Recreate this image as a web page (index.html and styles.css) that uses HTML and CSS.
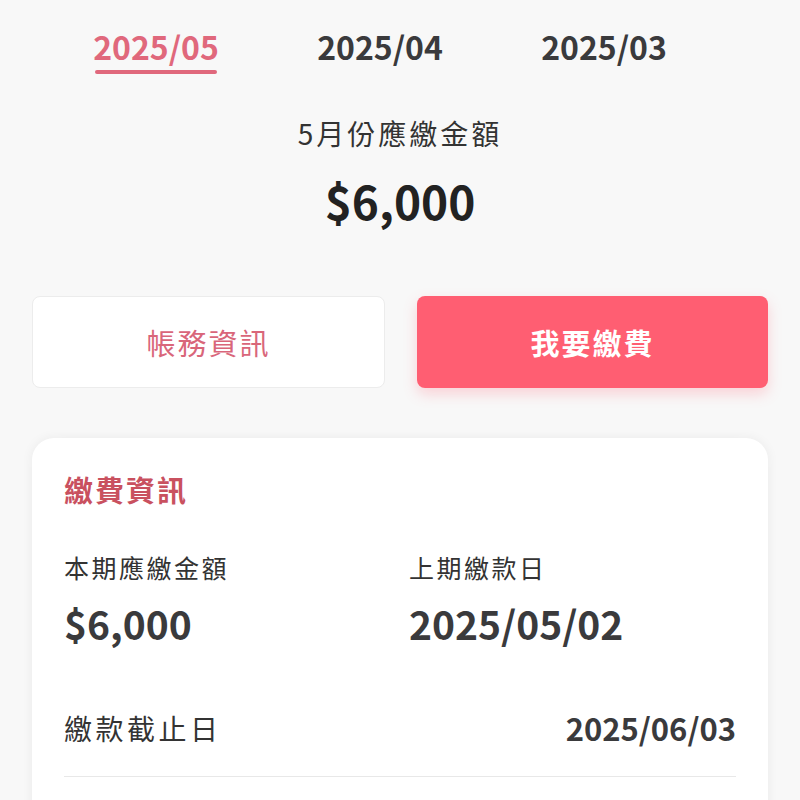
FILE: index.html
```html
<!DOCTYPE html>
<html lang="zh-Hant">
<head>
  <meta charset="UTF-8">
  <meta name="viewport" content="width=device-width, initial-scale=1.0">
  <title>繳費</title>
  <link rel="stylesheet" href="styles.css">
</head>
<body>
  <div class="page">
    <div class="tabs">
      <div class="tab active">2025/05</div>
      <div class="tab">2025/04</div>
      <div class="tab">2025/03</div>
    </div>

    <div class="summary">
      <div class="summary-label">5月份應繳金額</div>
      <div class="summary-amount">$6,000</div>
    </div>

    <div class="actions">
      <button class="btn btn-outline">帳務資訊</button>
      <button class="btn btn-primary">我要繳費</button>
    </div>

    <!-- payment info card -->
    <div class="card">
      <h2 class="card-title">繳費資訊</h2>
      <div class="info-grid">
        <div class="info-item">
          <div class="info-label">本期應繳金額</div>
          <div class="info-value">$6,000</div>
        </div>
        <div class="info-item">
          <div class="info-label">上期繳款日</div>
          <div class="info-value">2025/05/02</div>
        </div>
      </div>
      <div class="info-row">
        <div class="row-label">繳款截止日</div>
        <div class="row-value">2025/06/03</div>
      </div>
    </div>
  </div>
</body>
</html>
```

FILE: styles.css
```css
body {
  margin: 0;
  background-color: #f8f8f8;
  font-family: "Noto Sans CJK TC", "Noto Sans", sans-serif;
  color: #333;
}
.page {
  padding: 0 32px;
}
.tabs {
  display: flex;
  padding: 24px 0 0 12px;
}
.tab {
  width: 224px;
  text-align: center;
  font-size: 32px;
  font-weight: 700;
  color: #3a3a3c;
  line-height: 44px;
}
.tab.active {
  color: #e0687c;
}
.tab.active::after {
  content: "";
  display: block;
  width: 122px;
  height: 4px;
  margin: 2px auto 0;
  background-color: #e0687c;
  border-radius: 2px;
}
.summary {
  text-align: center;
  margin-top: 39px;
}
.summary-label {
  font-size: 28px;
  letter-spacing: 3px;
  color: #333;
  line-height: 40px;
}
.summary-amount {
  font-size: 46px;
  font-weight: 700;
  color: #222;
  line-height: 60px;
  margin-top: 17px;
}
.actions {
  display: flex;
  gap: 32px;
  margin-top: 66px;
}
.btn {
  flex: 1;
  height: 92px;
  border-radius: 8px;
  font-family: inherit;
  font-size: 29px;
  letter-spacing: 2px;
  cursor: pointer;
}
.btn-outline {
  background-color: #fff;
  border: 1px solid #ececec;
  color: #d9667a;
}
.btn-primary {
  background-color: #ff5e72;
  border: none;
  color: #fff;
  font-weight: 700;
  box-shadow: 0 6px 14px rgba(255, 94, 114, 0.25);
}
.card {
  margin-top: 50px;
  background-color: #fff;
  border-radius: 22px;
  box-shadow: 0 0 12px rgba(0, 0, 0, 0.06);
  padding: 31px 32px 60px;
}
.card-title {
  margin: 0;
  font-size: 29px;
  font-weight: 700;
  color: #c9515f;
  line-height: 40px;
  letter-spacing: 2px;
}
.info-grid {
  display: flex;
  margin-top: 40px;
}
.info-item:first-child {
  width: 345px;
}
.info-label {
  font-size: 25px;
  letter-spacing: 2.5px;
  color: #333;
  line-height: 36px;
}
.info-value {
  font-size: 39px;
  font-weight: 700;
  color: #3a3a3c;
  line-height: 52px;
  margin-top: 12px;
}
.info-row {
  display: flex;
  justify-content: space-between;
  align-items: center;
  margin-top: 56px;
  padding-bottom: 26px;
  border-bottom: 1px solid #e8e8e8;
}
.row-label {
  font-size: 28px;
  letter-spacing: 3.5px;
  color: #333;
}
.row-value {
  font-size: 31px;
  font-weight: 700;
  color: #3a3a3c;
}
```
